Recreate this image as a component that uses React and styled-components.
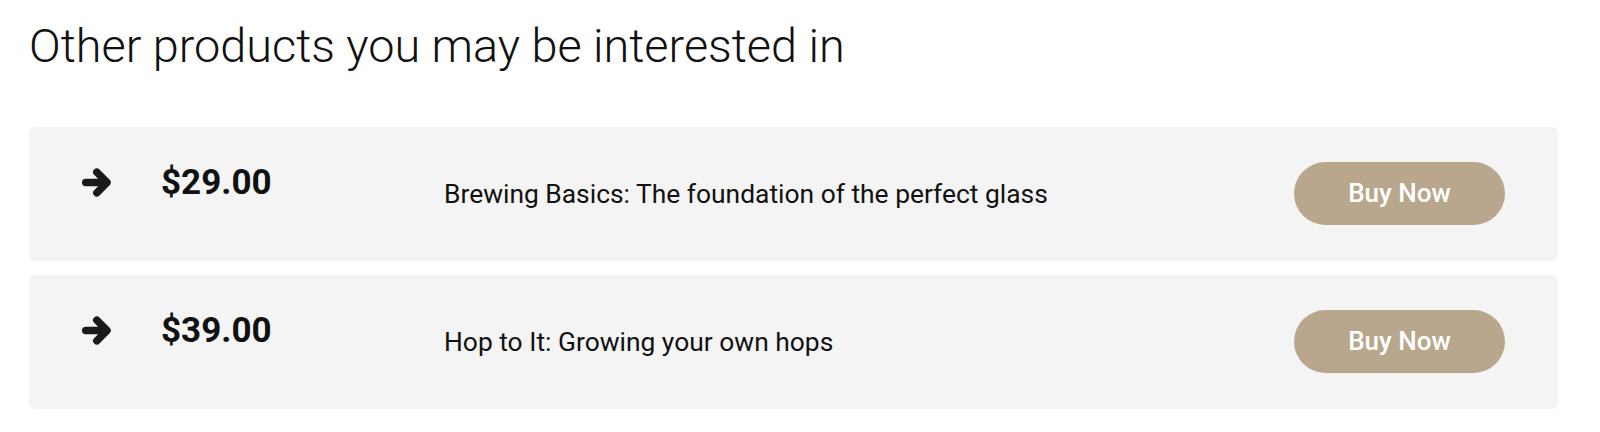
import styled, { createGlobalStyle } from "styled-components";

const products = [
  { id: 1, price: "$29.00", title: "Brewing Basics: The foundation of the perfect glass" },
  { id: 2, price: "$39.00", title: "Hop to It: Growing your own hops" },
];

const ArrowIcon = () => (
  <ArrowSvg viewBox="0 0 29 29" aria-hidden="true">
    <path d="M3.75 14.5 H23" />
    <path d="M14.8 4.2 L25 14.5 L14.8 24.8" />
  </ArrowSvg>
);

const App = () => {
  return (
    <>
      <GlobalStyle />
      <Page>
        <Heading>Other products you may be interested in</Heading>
        <List>
          {products.map((p) => (
            <Card key={p.id}>
              <Lead>
                <ArrowIcon />
                <Price>{p.price}</Price>
              </Lead>
              <Title>{p.title}</Title>
              <BuyButton>Buy Now</BuyButton>
            </Card>
          ))}
        </List>
      </Page>
    </>
  );
};

export default App;

const GlobalStyle = createGlobalStyle`
  body {
    margin: 0;
    background: #ffffff;
    font-family: Roboto, "Liberation Sans", sans-serif;
    color: #111111;
  }
`;

const Page = styled.div`
  padding: 18px 42px 0 29px;
`;

const Heading = styled.h1`
  margin: 0 0 53px 0;
  font-size: 46.8px;
  line-height: 56px;
  font-weight: 300;
  color: #111;
`;

const List = styled.div`
  display: flex;
  flex-direction: column;
  gap: 14px;
`;

const Card = styled.div`
  display: flex;
  align-items: center;
  background-color: #f4f4f4;
  border-radius: 6px;
  padding: 35px 53px 36px 53px;
`;

const Lead = styled.div`
  display: flex;
  align-items: center;
  width: 362px;
  margin-bottom: 22px;
`;

const ArrowSvg = styled.svg`
  width: 29px;
  height: 29px;
  flex-shrink: 0;
  margin-right: 50px;
  fill: none;
  stroke: #1a1a1a;
  stroke-width: 7.5;
  stroke-linecap: round;
  stroke-linejoin: round;
`;

const Price = styled.span`
  font-size: 35px;
  line-height: 40px;
  font-weight: 700;
  color: #111;
`;

const Title = styled.p`
  flex: 1;
  margin: 0;
  font-size: 26.4px;
  line-height: 30px;
  font-weight: 400;
  color: #111;
`;

const BuyButton = styled.button`
  width: 211px;
  height: 63px;
  padding: 0 0 2px 0;
  border: none;
  border-radius: 32px;
  background-color: #b8a78c;
  color: #ffffff;
  font-family: Roboto, "Liberation Sans", sans-serif;
  font-size: 26px;
  font-weight: 500;
  cursor: pointer;
`;
